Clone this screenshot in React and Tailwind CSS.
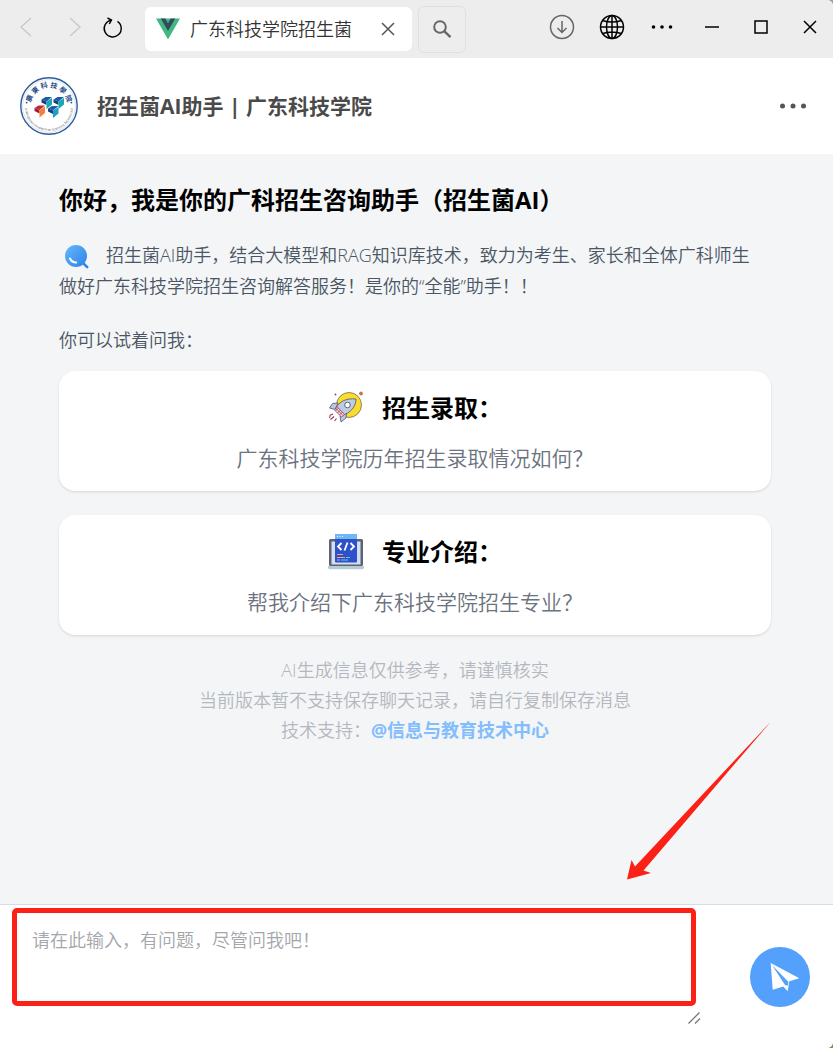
import React from "react";

const suggestions = [
  { title: "招生录取：", question: "广东科技学院历年招生录取情况如何？", Icon: RocketIcon },
  { title: "专业介绍：", question: "帮我介绍下广东科技学院招生专业？", Icon: CodeIcon },
];

function VueLogo() {
  return (
    <svg className="h-[22px] w-6 shrink-0" viewBox="0 0 24 21" aria-hidden="true">
      <path d="M0 0h24L12 21z" fill="#41b883" />
      <path d="M4.8 0h4.4L12 4.8 14.8 0h4.4L12 12.5z" fill="#35495e" />
    </svg>
  );
}

function LogoCube({ x, y, top, left, right }) {
  return (
    <g transform={`translate(${x} ${y})`}>
      <path d="M0 2.500L4 0h6.500L5 4.500z" fill={top} />
      <path d="M0 2.500l5 2v3.500L0 5.500z" fill={left} />
      <path d="M5 4.500L10.500 1v6.500L5 12z" fill={right} />
    </g>
  );
}

function SchoolLogo() {
  return (
    <svg className="h-[58px] w-[58px] shrink-0" viewBox="0 0 58 58" role="img" aria-label="校徽">
      <defs>
        <path id="logo-top" d="M10.500 29a18.500 18.500 0 0 1 37 0" />
        <path id="logo-bottom" d="M5 30a24 24 0 0 0 48 0" />
      </defs>
      <circle cx="29" cy="29" r="28.2" fill="#fff" stroke="#2f5d9b" strokeWidth="1.4" />
      <circle cx="29" cy="29" r="26.4" fill="none" stroke="#b9cbe2" strokeWidth="0.5" />
      <text fontSize="7" fontWeight="bold" fill="#1f4a86" textAnchor="middle">
        <textPath href="#logo-top" startOffset="50%">廣 東 科 技 學 院</textPath>
      </text>
      <text fontSize="2.8" fill="#3a3f4a" textAnchor="middle">
        <textPath href="#logo-bottom" startOffset="50%">GUANGDONG UNIVERSITY OF SCIENCE &amp; TECHNOLOGY</textPath>
      </text>
      <circle cx="6.6" cy="25.6" r="0.9" fill="#1f4a86" />
      <circle cx="51.4" cy="25.6" r="0.9" fill="#1f4a86" />
      <LogoCube x={14.5} y={28.5} top="#c4263c" left="#a01c34" right="#f0803a" />
      <LogoCube x={21.5} y={20} top="#1c5ca8" left="#12407e" right="#18a8b4" />
      <LogoCube x={33.5} y={20} top="#1c5ca8" left="#12407e" right="#18a8b4" />
      <LogoCube x={28} y={29} top="#1c5ca8" left="#12407e" right="#1f9fc4" />
    </svg>
  );
}

function SearchBubble() {
  return (
    <svg className="mr-[15px] ml-1 inline-block h-7 w-7 align-middle" viewBox="0 0 28 28" aria-hidden="true">
      <defs>
        <linearGradient id="bubble" x1="0" y1="0" x2="1" y2="1">
          <stop offset="0" stopColor="#67b8f7" />
          <stop offset="1" stopColor="#2b82e8" />
        </linearGradient>
      </defs>
      <path d="M20 20l4.200 4.200" stroke="#2f86e8" strokeWidth="2.600" strokeLinecap="round" />
      <circle cx="13" cy="13" r="11" fill="url(#bubble)" />
      <path d="M7 15.500c1.200 2.700 3.300 4 6.200 4" fill="none" stroke="#fff" strokeWidth="2" strokeLinecap="round" />
    </svg>
  );
}

function RocketIcon() {
  return (
    <svg className="h-9 w-9 shrink-0" viewBox="0 0 36 36" fill="none" aria-hidden="true">
      <circle cx="21" cy="15" r="12.500" fill="#fbdc2c" stroke="#4b3a52" strokeWidth="0.6" />
      <path d="M10 13l-5.500.5L1.500 18l6 1.500z" fill="#b9c8e6" stroke="#3c4259" strokeWidth="0.7" />
      <path d="M18.500 23l-.5 5-5 4-1-6z" fill="#b9c8e6" stroke="#3c4259" strokeWidth="0.7" />
      <path d="M8 17.500C12 11 19 8 28 9c0 8-6 14-13 16z" fill="#bccbe6" stroke="#3c4259" strokeWidth="0.7" />
      <path d="M9 16.500l7.500 8-3 2.500-7-7z" fill="#f5e9ee" stroke="#9c3347" strokeWidth="0.8" />
      <path d="M7.500 18l7.500 7.500M10.500 18l-3 3M12.500 20l-3 3M14.500 22l-3 3" stroke="#9c3347" strokeWidth="0.8" />
      <circle cx="19.500" cy="15" r="2.800" fill="#fff" stroke="#3c4259" strokeWidth="0.800" />
      <path d="M1.500 25.500l3.500-1.500M2.500 29.500l3.500-3M6.500 31l2-2.500M1 27.500l1.500-1" stroke="#a2304c" strokeWidth="1.100" />
      <circle cx="33" cy="3.500" r="1.500" fill="#f5792f" stroke="#8b3a32" strokeWidth="0.600" />
      <circle cx="7.500" cy="4.500" r="0.900" fill="#9c3347" />
    </svg>
  );
}

function CodeIcon() {
  return (
    <svg className="h-9 w-9 shrink-0" viewBox="0 0 36 36" fill="none" aria-hidden="true">
      <rect x="1" y="5" width="34" height="27" rx="1.500" fill="#5f6275" />
      <path d="M3.500 7.500h29v23h-29z" fill="#d2e0f5" />
      <rect x="7" y="0" width="22" height="28.500" rx="1.200" fill="#2f51c8" />
      <path d="M8.200 0h19.600c.7 0 1.200.5 1.200 1.200V5H7V1.200C7 .5 7.500 0 8.200 0z" fill="#6eb7f3" />
      <path d="M9 2.500h1M11.500 2.500h1M14 2.500h1" stroke="#e7f5ff" />
      <path d="M13.500 9L10 12.500l3.500 3.500M22.500 9L26 12.500 22.500 16M19.500 8.500l-3 8" stroke="#fff" strokeWidth="1.800" />
      <path d="M9 20.500h6M9 23.500h8M9 26h3" stroke="#e8a49a" strokeWidth="1.200" />
      <path d="M13 26h7M18 23.500h4" stroke="#4dd1df" strokeWidth="1.200" />
      <path d="M0 32h36v1.500c0 1-1 1.800-2 1.800H2c-1 0-2-.8-2-1.800z" fill="#b5ccd5" />
    </svg>
  );
}

function TitleBar() {
  return (
    <div className="flex h-[58px] items-center bg-[#ededed] text-black">
      <button aria-label="后退" className="flex h-10 w-[52px] items-center justify-center pb-1 text-[#c9c9c9]">
        <svg className="h-6 w-6" viewBox="0 0 24 24" fill="none" stroke="currentColor" strokeWidth="1.400"><path d="M17 3l-10 9 10 9" /></svg>
      </button>
      <button aria-label="前进" className="flex h-10 w-[45px] items-center justify-center pb-1 text-[#c9c9c9]">
        <svg className="h-6 w-6" viewBox="0 0 24 24" fill="none" stroke="currentColor" strokeWidth="1.400"><path d="M7 3l10 9-10 9" /></svg>
      </button>
      <button aria-label="刷新" className="flex h-10 w-8 items-center justify-center pr-[2px] pb-[2px]">
        <svg className="h-6 w-6" viewBox="0 0 24 24" fill="none" stroke="currentColor" strokeWidth="1.400"><path d="M17.500 5.400A8.500 8.500 0 1 1 11 4.100M7.500 2l4 2-2.200 4" /></svg>
      </button>
      <div className="ml-4 flex h-11 w-[267px] items-center rounded-md bg-white pr-3 pl-[11px]">
        <VueLogo />
        <span className="ml-[10px] flex-1 truncate text-[18px] leading-6 text-[#333] font-[350]">广东科技学院招生菌</span>
        <button aria-label="关闭标签页" className="flex h-6 w-6 items-center justify-center text-[#555]">
          <svg className="h-[14px] w-[14px]" viewBox="0 0 14 14" fill="none" stroke="currentColor" strokeWidth="1.500"><path d="M1 1l12 12M13 1L1 13" /></svg>
        </button>
      </div>
      <button aria-label="搜索" className="ml-[6px] flex h-[47px] w-12 items-center justify-center rounded-md border border-[#e0e0e0] text-[#666]">
        <svg className="h-5 w-5" viewBox="0 0 20 20" fill="none" stroke="currentColor" strokeWidth="2"><circle cx="8" cy="8" r="5.800" /><path d="M12.200 12.200l6.300 6" strokeWidth="2.300" /></svg>
      </button>
      <div className="ml-auto flex h-full items-center pb-1">
        <button aria-label="下载" className="flex h-10 w-[50px] items-center justify-center text-[#666]">
          <svg className="h-[26px] w-[26px]" viewBox="0 0 26 26" fill="none" stroke="currentColor" strokeWidth="1.500"><circle cx="13" cy="13" r="11.500" /><path d="M13 7v11.500M8.500 14l4.500 4.500 4.500-4.500" /></svg>
        </button>
        <button aria-label="网页" className="flex h-10 w-[50px] items-center justify-center">
          <svg className="h-[26px] w-[26px]" viewBox="0 0 26 26" fill="none" stroke="currentColor" strokeWidth="1.500"><circle cx="13" cy="13" r="11.500" /><ellipse cx="13" cy="13" rx="5.500" ry="11.500" /><path d="M13 1.500v23M1.500 13h23M3.500 6.500c6 2 13 2 19 0M3.500 19.500c6-2 13-2 19 0" /></svg>
        </button>
        <button aria-label="更多选项" className="flex h-10 w-[50px] items-center justify-center">
          <svg className="h-6 w-6" viewBox="0 0 24 24" fill="currentColor"><circle cx="3.500" cy="12" r="1.800" /><circle cx="12" cy="12" r="1.800" /><circle cx="20.500" cy="12" r="1.800" /></svg>
        </button>
        <button aria-label="最小化" className="flex h-10 w-[49px] items-center justify-center">
          <svg className="h-4 w-4" viewBox="0 0 16 16" fill="none" stroke="currentColor" strokeWidth="1.500"><path d="M1 8h14" /></svg>
        </button>
        <button aria-label="最大化" className="flex h-10 w-[50px] items-center justify-center">
          <svg className="h-4 w-4" viewBox="0 0 16 16" fill="none" stroke="currentColor" strokeWidth="1.500"><path d="M2 2h12v12H2z" /></svg>
        </button>
        <button aria-label="关闭" className="flex h-10 w-[47px] items-center justify-center">
          <svg className="h-4 w-4" viewBox="0 0 16 16" fill="none" stroke="currentColor" strokeWidth="1.500"><path d="M2 2l12 12M14 2L2 14" /></svg>
        </button>
      </div>
    </div>
  );
}

export default function App() {
  return (
    <div lang="zh-CN" className="min-h-screen bg-linear-to-b from-[#a0a0a0] to-[#8b8b4a] font-['Open_Sans','Noto_Sans_CJK_SC',sans-serif]">
      <div className="flex min-h-screen flex-col overflow-hidden rounded-r-md bg-white">
        <TitleBar />
        <header className="flex h-24 items-center bg-white px-5">
          <SchoolLogo />
          <h1 className="ml-[19px] text-[21px] leading-8 font-bold text-[#4a4a4a]">招生菌AI助手 | 广东科技学院</h1>
          <button aria-label="更多" className="ml-auto flex h-10 w-10 items-center justify-center text-[#555]">
            <svg className="h-7 w-7" viewBox="0 0 28 28" fill="currentColor"><circle cx="3.500" cy="14" r="2.500" /><circle cx="14" cy="14" r="2.500" /><circle cx="24.500" cy="14" r="2.500" /></svg>
          </button>
        </header>

        <main className="flex-1 bg-[#f3f5f7] pt-7 pr-[62px] pb-8 pl-[59px]">
          <h2 className="text-[24px] leading-9 font-bold text-black">你好，我是你的广科招生咨询助手（招生菌AI）</h2>
          <p className="mt-[22px] pr-3 text-[18px] leading-[31px] font-[350] text-[#4b5563]">
            <SearchBubble />招生菌AI助手，结合大模型和RAG知识库技术，致力为考生、家长和全体广科师生做好广东科技学院招生咨询解答服务！是你的“全能”助手！！
          </p>
          <p className="mt-[23px] text-[18px] leading-[30px] font-[350] text-[#4b5563]">你可以试着问我：</p>
          <div className="mt-4 flex flex-col gap-6">
            {suggestions.map(({ title, question, Icon }) => (
              <button key={title} className="flex w-full flex-col items-center gap-[17px] rounded-2xl bg-white py-[18px] shadow-sm">
                <span className="flex items-center gap-[18px] pt-px text-[24px] leading-9 font-bold text-black">
                  <Icon />
                  {title}
                </span>
                <span className="text-[21px] leading-[30px] font-[350] text-[#6b7280]">{question}</span>
              </button>
            ))}
          </div>
          <div className="mt-5 text-center text-[18px] leading-[30px] font-[350] text-[#b4b8be]">
            <p>AI生成信息仅供参考，请谨慎核实</p>
            <p>当前版本暂不支持保存聊天记录，请自行复制保存消息</p>
            <p>技术支持：<a href="#support" className="font-bold text-[#84bdfb]">@信息与教育技术中心</a></p>
          </div>
        </main>

        <footer className="relative flex h-36 items-center border-t border-[#d5dbe8] bg-white pr-[23px] pl-3">
          <div className="relative mt-[3px] h-[117px] flex-1 self-start">
            <textarea
              aria-label="输入问题"
              placeholder="请在此输入，有问题，尽管问我吧！"
              className="block h-full w-full resize-none bg-transparent px-5 pt-[17px] text-[18px] leading-[30px] font-[350] text-[#333] outline-none placeholder:text-[#a3a6ab]"
            />
            <div className="pointer-events-none absolute top-0 right-[6px] left-0 h-[98px] rounded-[5px] border-5 border-[#fb2116]" />
            <svg className="pointer-events-none absolute right-0 bottom-0 h-4 w-4" viewBox="0 0 16 16" fill="none" stroke="#777" strokeWidth="1.300" aria-hidden="true"><path d="M2.500 14.500l11-11M9 14.500l5-5" /></svg>
          </div>
          <button aria-label="发送" className="ml-12 flex h-[60px] w-[60px] items-center justify-center rounded-full bg-[#53a1fd]">
            <svg className="h-[60px] w-[60px]" viewBox="0 0 60 60" fill="#fff" aria-hidden="true">
              <path d="M20.700 16l28.600 15.300-10 3-1.600 10-4.400-4.800-10.600 3.200z" />
              <path d="M22 18l16.500 17-.8 3.800-2.700-.8z" fill="#53a1fd" />
            </svg>
          </button>
          <svg className="pointer-events-none absolute right-[60px] bottom-[167px] h-40 w-[148px]" viewBox="0 0 148 160" fill="#fb2116" aria-hidden="true">
            <path d="M146 0.500L18.500 149.500 26 152 2 158.500 6.500 139 10 145.500z" />
          </svg>
        </footer>
      </div>
    </div>
  );
}
